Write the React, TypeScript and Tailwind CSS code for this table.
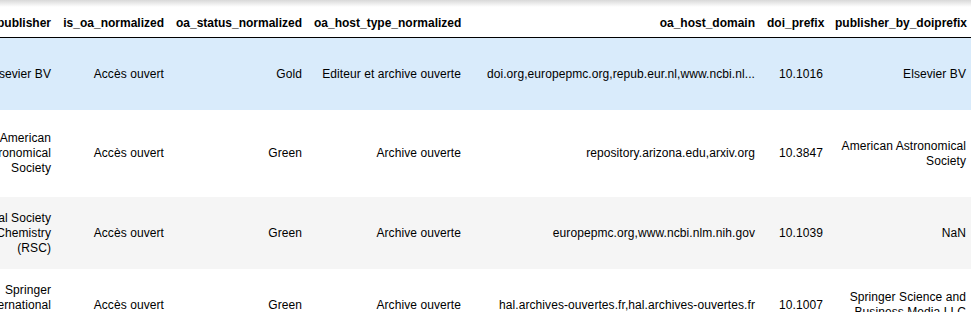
// DataFrame preview — scrolled table of publications with OA metadata

type Row = {
  publisher: string;
  isOa: string;
  status: string;
  hostType: string;
  hostDomain: string;
  doiPrefix: string;
  publisherByDoi: string;
  height: string;
  bg: string;
};

const rows: Row[] = [
  {
    publisher: "Elsevier BV",
    isOa: "Accès ouvert",
    status: "Gold",
    hostType: "Editeur et archive ouverte",
    hostDomain: "doi.org,europepmc.org,repub.eur.nl,www.ncbi.nl...",
    doiPrefix: "10.1016",
    publisherByDoi: "Elsevier BV",
    height: "h-[72px]",
    bg: "bg-[#d9ebfb]",
  },
  {
    publisher: "American Astronomical Society",
    isOa: "Accès ouvert",
    status: "Green",
    hostType: "Archive ouverte",
    hostDomain: "repository.arizona.edu,arxiv.org",
    doiPrefix: "10.3847",
    publisherByDoi: "American Astronomical Society",
    height: "h-[87px]",
    bg: "bg-white",
  },
  {
    publisher: "Royal Society of Chemistry (RSC)",
    isOa: "Accès ouvert",
    status: "Green",
    hostType: "Archive ouverte",
    hostDomain: "europepmc.org,www.ncbi.nlm.nih.gov",
    doiPrefix: "10.1039",
    publisherByDoi: "NaN",
    height: "h-[72px]",
    bg: "bg-[#f5f5f5]",
  },
  {
    publisher: "Springer International Publishing",
    isOa: "Accès ouvert",
    status: "Green",
    hostType: "Archive ouverte",
    hostDomain: "hal.archives-ouvertes.fr,hal.archives-ouvertes.fr",
    doiPrefix: "10.1007",
    publisherByDoi: "Springer Science and Business Media LLC",
    height: "h-[72px]",
    bg: "bg-white",
  },
];

const headers = [
  "publisher",
  "is_oa_normalized",
  "oa_status_normalized",
  "oa_host_type_normalized",
  "oa_host_domain",
  "doi_prefix",
  "publisher_by_doiprefix",
];

const widths = ["w-[92px]", "w-[113px]", "w-[138px]", "w-[159px]", "w-[294px]", "w-[68px]", "w-[143px]"];

export default function App() {
  return (
    <div
      className="relative w-[971px] h-[312px] overflow-hidden bg-white text-black text-[12px] leading-[15px]"
      style={{ fontFamily: "'Liberation Sans', Arial, sans-serif" }}
    >
      <table className="-ml-[35px] table-fixed border-separate border-spacing-0 w-[1007px]">
        <colgroup>
          {widths.map((w, i) => (
            <col key={i} className={w} />
          ))}
        </colgroup>
        <thead>
          <tr className="h-[38px]">
            {headers.map(h => (
              <th key={h} className="px-[6px] pb-[6px] align-bottom text-right font-bold border-b border-black">
                {h}
              </th>
            ))}
          </tr>
        </thead>
        <tbody>
          {rows.map((r, i) => (
            <tr key={i} className={`${r.height} ${r.bg}`}>
              {[r.publisher, r.isOa, r.status, r.hostType, r.hostDomain, r.doiPrefix, r.publisherByDoi].map((v, j) => (
                <td key={j} className="px-[6px] align-middle text-right tracking-[0.08px]">
                  {v}
                </td>
              ))}
            </tr>
          ))}
        </tbody>
      </table>

      {/* inset shadow along top edge of the scroll area */}
      <div className="absolute inset-x-0 top-0 h-[7px] bg-gradient-to-b from-black/15 to-transparent pointer-events-none" />
    </div>
  );
}
